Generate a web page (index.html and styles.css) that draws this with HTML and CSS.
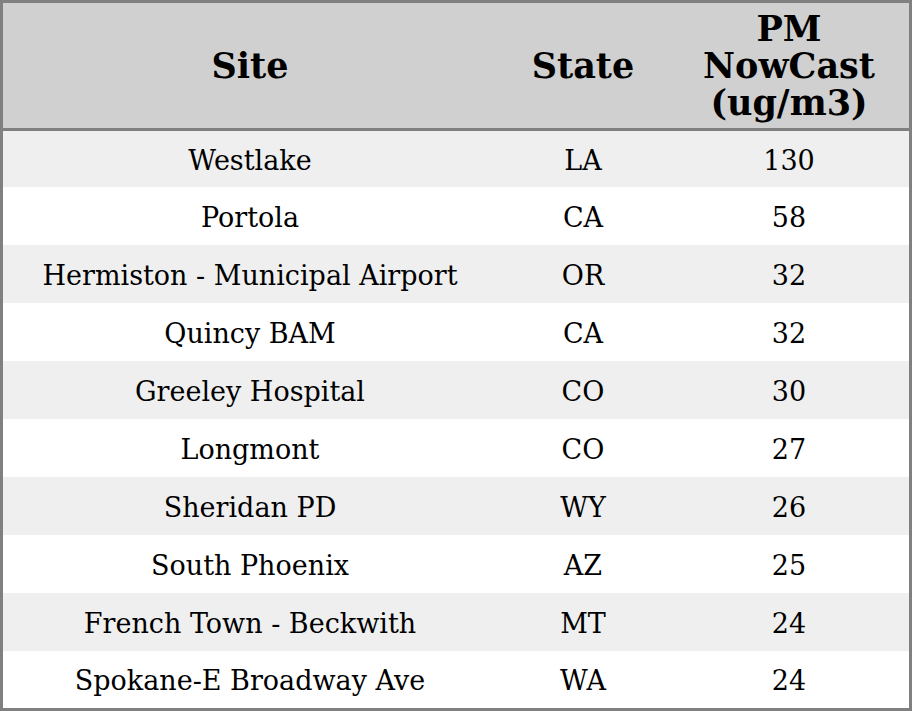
FILE: index.html
```html
<!DOCTYPE html>
<html>
<head>
<meta charset="utf-8">
<link rel="stylesheet" href="styles.css">
</head>
<body>
<div class="frame">
<table class="data">
  <colgroup>
    <col class="c-site">
    <col class="c-state">
    <col class="c-pm">
  </colgroup>
  <thead>
    <tr><th>Site</th><th>State</th><th>PM<br>NowCast<br>(ug/m3)</th></tr>
  </thead>
  <tbody>
    <tr><td>Westlake</td><td>LA</td><td>130</td></tr>
    <tr><td>Portola</td><td>CA</td><td>58</td></tr>
    <tr><td>Hermiston - Municipal Airport</td><td>OR</td><td>32</td></tr>
    <tr><td>Quincy BAM</td><td>CA</td><td>32</td></tr>
    <tr><td>Greeley Hospital</td><td>CO</td><td>30</td></tr>
    <tr><td>Longmont</td><td>CO</td><td>27</td></tr>
    <tr><td>Sheridan PD</td><td>WY</td><td>26</td></tr>
    <tr><td>South Phoenix</td><td>AZ</td><td>25</td></tr>
    <tr><td>French Town - Beckwith</td><td>MT</td><td>24</td></tr>
    <tr><td>Spokane-E Broadway Ave</td><td>WA</td><td>24</td></tr>
  </tbody>
</table>
</div>
</body>
</html>
```

FILE: styles.css
```css
html, body {
  margin: 0;
  padding: 0;
  background: #ffffff;
}
.frame {
  width: 912px;
  height: 711px;
  overflow: hidden;
}
.data {
  width: 912px;
  border-collapse: separate;
  border-spacing: 0;
  border: 3px solid #808080;
  font-family: "DejaVu Serif", serif;
  color: #000;
  table-layout: fixed;
}
.c-site { width: 494px; }
.c-state { width: 172px; }
.c-pm { width: 240px; }
.data th {
  background: #d0d0d0;
  font-size: 35px;
  font-weight: bold;
  line-height: 37px;
  height: 125px;
  padding: 0;
  text-align: center;
  vertical-align: middle;
  border-bottom: 3px solid #808080;
}
.data td {
  font-size: 27px;
  height: 56px;
  padding: 2px 0 0;
  text-align: center;
  vertical-align: middle;
}
.data tbody tr:first-child td { height: 54px; }
.data tbody tr:last-child td { height: 55px; }
.data tbody tr:nth-child(odd) td { background: #efefef; }
.data tbody tr:nth-child(even) td { background: #ffffff; }
```
